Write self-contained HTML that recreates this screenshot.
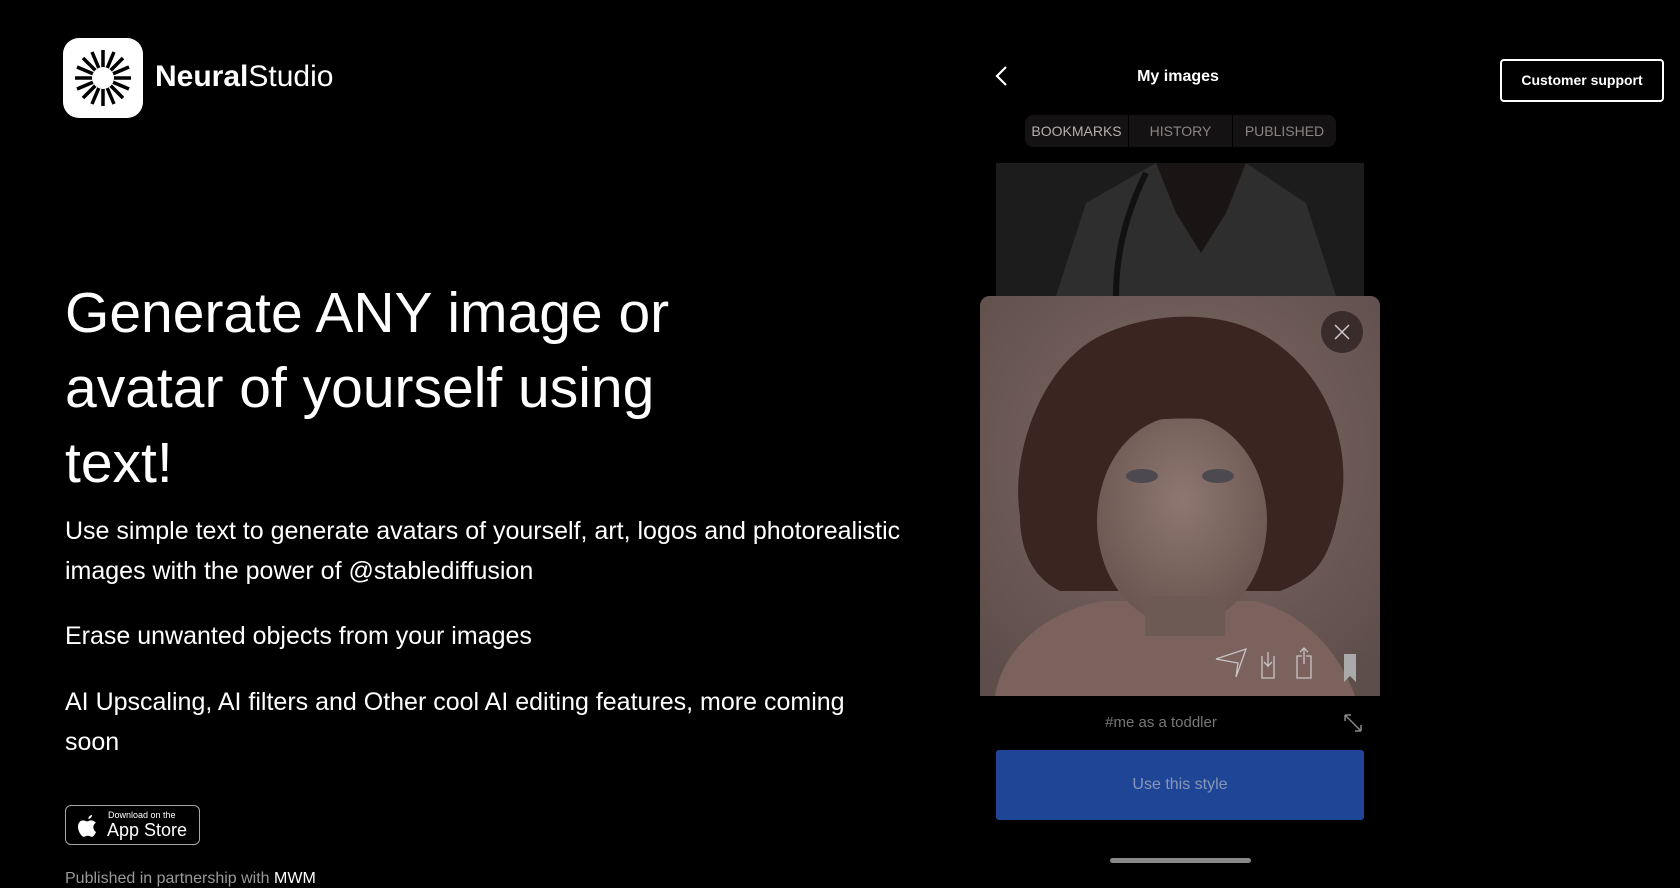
<!DOCTYPE html>
<html><head><meta charset="utf-8"><style>
*{margin:0;padding:0;box-sizing:border-box}
body{width:1680px;height:876px;background:#000;overflow:hidden;position:relative;font-family:"Liberation Sans",sans-serif;color:#fff}
.abs{position:absolute}
h1{position:absolute;left:65px;top:276px;font-size:57px;font-weight:400;line-height:75px;width:640px}
.p{position:absolute;left:65px;font-size:25px;line-height:40px;width:860px}
.tabs{left:1025px;top:115px;width:311px;height:32px;background:#141212;border-radius:8px;display:flex;font-size:14px;color:#8a8584}
.tabs div{flex:1;text-align:center;line-height:32px;border-right:1px solid #000}
</style></head><body>
<div class="abs" style="left:63px;top:38px;width:80px;height:80px;background:#fff;border-radius:16px">
<svg width="80" height="80" viewBox="0 0 80 80"><g stroke="#000" stroke-width="3.5"><line x1="40" y1="12" x2="40" y2="68"/><line x1="12" y1="40" x2="68" y2="40"/><line x1="20" y1="20" x2="60" y2="60"/><line x1="60" y1="20" x2="20" y2="60"/><line x1="29" y1="14" x2="51" y2="66"/><line x1="51" y1="14" x2="29" y2="66"/><line x1="14" y1="29" x2="66" y2="51"/><line x1="14" y1="51" x2="66" y2="29"/></g><circle cx="40" cy="40" r="11" fill="#fff"/></svg></div>
<div class="abs" style="left:155px;top:60px;font-size:30px"><b>Neural</b>Studio</div>
<h1>Generate ANY image or avatar of yourself using text!</h1>
<div class="p" style="top:511px">Use simple text to generate avatars of yourself, art, logos and photorealistic images with the power of @stablediffusion</div>
<div class="p" style="top:616px">Erase unwanted objects from your images</div>
<div class="p" style="top:682px;width:820px">AI Upscaling, AI filters and Other cool AI editing features, more coming soon</div>
<div class="abs" style="left:65px;top:805px;width:135px;height:40px;border:1px solid #a6a6a6;border-radius:6px">
<svg class="abs" style="left:10px;top:7px" width="24" height="26" viewBox="0 0 24 26"><path fill="#fff" d="M16 2c0 2-1.6 4-3.6 4-.2-2 1.6-4 3.6-4zM20 19c-1 2.4-2.4 4.8-4.2 4.8-1.6 0-2-1-4-1s-2.4 1-4 1C6 23.8 2 19 2 13.6 2 9.6 4.6 7.4 7 7.4c1.7 0 3 1.1 4 1.1s2.4-1.2 4.4-1.1c.8 0 3 .3 4.4 2.4-3.6 2.2-3 7.3.2 9.2z"/></svg>
<div class="abs" style="left:42px;top:4px;font-size:9px">Download on the</div>
<div class="abs" style="left:41px;top:14px;font-size:18px">App Store</div></div>
<div class="abs" style="left:65px;top:870px;font-size:16px;color:#999">Published in partnership with <span style="color:#fff">MWM</span></div>
<svg class="abs" style="left:992px;top:64px" width="20" height="24"><path d="M14 3 5 12l9 9" stroke="#fff" stroke-width="2.2" fill="none"/></svg>
<div class="abs" style="left:1100px;width:156px;text-align:center;top:68px;font-size:16px;font-weight:bold">My images</div>
<div class="abs tabs"><div style="color:#b5b0ae">BOOKMARKS</div><div>HISTORY</div><div style="border:none">PUBLISHED</div></div>
<div class="abs" style="left:996px;top:163px;width:368px;height:133px;background:#1c1c1d;overflow:hidden">
<svg width="368" height="133"><path d="M60 133 90 40 160 0h90l60 40 30 93z" fill="#2e2e2f"/><path d="M160 0h90l-20 50-25 40-25-40z" fill="#1a1414"/><path d="M150 10c-20 40-30 80-30 123" stroke="#111" stroke-width="6" fill="none"/></svg></div>
<div class="abs" style="left:980px;top:296px;width:400px;height:400px;border-radius:10px 10px 0 0;overflow:hidden;background:#7a6661">
<svg width="400" height="400" viewBox="0 0 400 400"><defs><radialGradient id="bg" cx=".5" cy=".4" r=".7"><stop offset="0" stop-color="#806a64"/><stop offset="1" stop-color="#5e4e4b"/></radialGradient><radialGradient id="fc" cx=".5" cy=".4" r=".6"><stop offset="0" stop-color="#8e7770"/><stop offset="1" stop-color="#6a5550"/></radialGradient></defs>
<rect width="400" height="400" fill="url(#bg)"/>
<path d="M15 400c10-60 70-90 110-95h150c40 10 80 40 100 95z" fill="#7c625d"/>
<path d="M40 220c-10-60 20-150 80-180 50-25 130-30 180 10 60 45 70 120 60 160-10 50-20 70-60 85H80C50 280 40 250 40 220z" fill="#3a2521"/>
<ellipse cx="202" cy="225" rx="85" ry="105" fill="url(#fc)"/>
<path d="M140 130c30-30 110-30 130 0-30-10-100-10-130 0z" fill="#3a2521"/>
<rect x="165" y="300" width="80" height="40" fill="#6e5a55"/>
<ellipse cx="162" cy="180" rx="16" ry="7" fill="#4c4a50"/><ellipse cx="238" cy="180" rx="16" ry="7" fill="#4c4a50"/>
<circle cx="362" cy="36" r="21" fill="#3a2c2a"/>
<path d="M355 29l14 14M369 29l-14 14" stroke="#ccc" stroke-width="1.5"/>
<g stroke="#c8c4c4" stroke-width="1.3" fill="none"><path d="M258 367l-22-4 30-10-10 28z"/><path d="M282 360v22h12v-22M288 356v14l-4-4M288 370l4-4"/><path d="M322 360h-5v22h14v-22h-5M324 352v16M320 356l4-4 4 4"/></g>
<path d="M364 358h12v28l-6-6-6 6z" fill="#aaa"/></svg></div>
<div class="abs" style="left:996px;top:714px;width:330px;text-align:center;font-size:15px;color:#777">#me as a toddler</div>
<svg class="abs" style="left:1343px;top:713px" width="20" height="20"><path d="M2 2l16 16M2 2h6M2 2v6M18 18h-6M18 18v-6" stroke="#888" stroke-width="1.5" fill="none"/></svg>
<div class="abs" style="left:996px;top:750px;width:368px;height:70px;background:#1f4696;border-radius:3px;text-align:center;line-height:70px;font-size:16px;color:#8796b8">Use this style</div>
<div class="abs" style="left:1110px;top:858px;width:141px;height:5px;background:#888;border-radius:3px"></div>
<div class="abs" style="left:1500px;top:59px;width:164px;height:43px;border:2px solid #fff;border-radius:4px;text-align:center;line-height:39px;font-size:14px;font-weight:bold">Customer support</div>
</body></html>
